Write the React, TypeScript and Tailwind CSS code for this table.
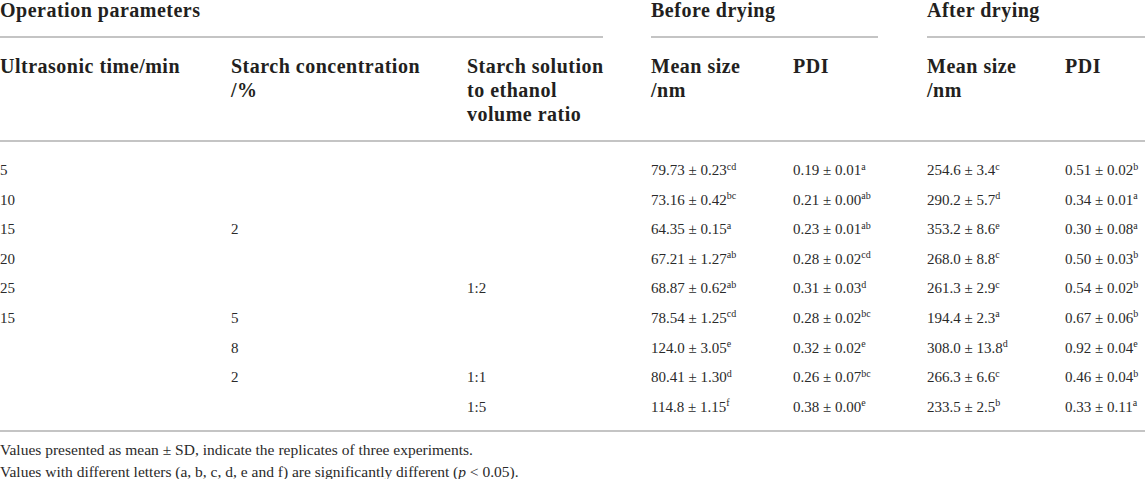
import React from "react";

type Cell = { v: string; s?: string };

const rows: { c1: string; c2: string; c3: string; d: Cell[] }[] = [
  { c1: "5", c2: "", c3: "", d: [{ v: "79.73 ± 0.23", s: "cd" }, { v: "0.19 ± 0.01", s: "a" }, { v: "254.6 ± 3.4", s: "c" }, { v: "0.51 ± 0.02", s: "b" }] },
  { c1: "10", c2: "", c3: "", d: [{ v: "73.16 ± 0.42", s: "bc" }, { v: "0.21 ± 0.00", s: "ab" }, { v: "290.2 ± 5.7", s: "d" }, { v: "0.34 ± 0.01", s: "a" }] },
  { c1: "15", c2: "2", c3: "", d: [{ v: "64.35 ± 0.15", s: "a" }, { v: "0.23 ± 0.01", s: "ab" }, { v: "353.2 ± 8.6", s: "e" }, { v: "0.30 ± 0.08", s: "a" }] },
  { c1: "20", c2: "", c3: "", d: [{ v: "67.21 ± 1.27", s: "ab" }, { v: "0.28 ± 0.02", s: "cd" }, { v: "268.0 ± 8.8", s: "c" }, { v: "0.50 ± 0.03", s: "b" }] },
  { c1: "25", c2: "", c3: "1:2", d: [{ v: "68.87 ± 0.62", s: "ab" }, { v: "0.31 ± 0.03", s: "d" }, { v: "261.3 ± 2.9", s: "c" }, { v: "0.54 ± 0.02", s: "b" }] },
  { c1: "15", c2: "5", c3: "", d: [{ v: "78.54 ± 1.25", s: "cd" }, { v: "0.28 ± 0.02", s: "bc" }, { v: "194.4 ± 2.3", s: "a" }, { v: "0.67 ± 0.06", s: "b" }] },
  { c1: "", c2: "8", c3: "", d: [{ v: "124.0 ± 3.05", s: "e" }, { v: "0.32 ± 0.02", s: "e" }, { v: "308.0 ± 13.8", s: "d" }, { v: "0.92 ± 0.04", s: "e" }] },
  { c1: "", c2: "2", c3: "1:1", d: [{ v: "80.41 ± 1.30", s: "d" }, { v: "0.26 ± 0.07", s: "bc" }, { v: "266.3 ± 6.6", s: "c" }, { v: "0.46 ± 0.04", s: "b" }] },
  { c1: "", c2: "", c3: "1:5", d: [{ v: "114.8 ± 1.15", s: "f" }, { v: "0.38 ± 0.00", s: "e" }, { v: "233.5 ± 2.5", s: "b" }, { v: "0.33 ± 0.11", s: "a" }] },
];

const cols = "grid grid-cols-[231px_236px_184px_142px_134px_138px_80px]";

function Rule() {
  return <div className="h-[2px] bg-[#c4c4c4]" />;
}

export default function App() {
  return (
    <div
      className="w-[1145px] h-[479px] overflow-hidden bg-white text-[#231f20]"
      style={{ fontFamily: '"Liberation Serif", "Times New Roman", serif' }}
    >
      {/* group headers */}
      <div className="grid grid-cols-[651px_276px_218px] font-bold text-[20px] leading-[20px] tracking-[0.5px]">
        <div>
          <div className="pb-[16px]">Operation parameters</div>
          <div className="mr-[48px]"><Rule /></div>
        </div>
        <div>
          <div className="pb-[16px]">Before drying</div>
          <div className="mr-[49px]"><Rule /></div>
        </div>
        <div>
          <div className="pb-[16px]">After drying</div>
          <Rule />
        </div>
      </div>

      {/* column headers */}
      <div className={`${cols} font-bold text-[20px] leading-[24px] tracking-[0.5px] pt-[16px] pb-[14px]`}>
        <div>Ultrasonic time/min</div>
        <div>Starch concentration<br />/%</div>
        <div>Starch solution<br />to ethanol<br />volume ratio</div>
        <div>Mean size<br />/nm</div>
        <div>PDI</div>
        <div>Mean size<br />/nm</div>
        <div>PDI</div>
      </div>
      <Rule />

      {/* data */}
      <div className="text-[15px] leading-[29.6px] pt-[14px] pb-[8px] text-[#2a2a2a]">
        {rows.map((r, i) => (
          <div key={i} className={cols}>
            <div>{r.c1}</div>
            <div>{r.c2}</div>
            <div>{r.c3}</div>
            {r.d.map((c, j) => (
              <div key={j} className="whitespace-nowrap">
                {c.v}
                {c.s && <sup className="text-[10px] top-[-0.55em]">{c.s}</sup>}
              </div>
            ))}
          </div>
        ))}
      </div>
      <Rule />

      {/* footnotes */}
      <div className="text-[15.5px] leading-[22px] pt-[7px] text-[#2a2a2a]">
        <div>Values presented as mean ± SD, indicate the replicates of three experiments.</div>
        <div>
          Values with different letters (a, b, c, d, e and f) are significantly different (<i>p</i> &lt; 0.05).
        </div>
      </div>
    </div>
  );
}
